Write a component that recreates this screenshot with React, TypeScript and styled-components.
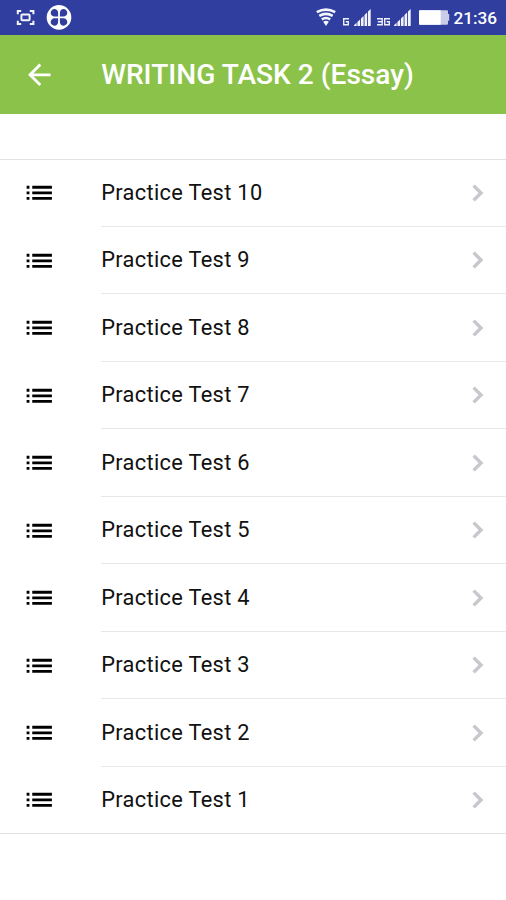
import React from "react";
import styled, { createGlobalStyle } from "styled-components";

const GlobalStyle = createGlobalStyle`
  * { box-sizing: border-box; }
  body { margin: 0; background: #fff; font-family: Roboto, "Liberation Sans", sans-serif; overflow: hidden; }
  svg { display: block; flex: none; }
`;

const Screen = styled.div`
  width: 506px;
  height: 900px;
  background: #fff;
`;

const StatusBar = styled.header`
  display: flex;
  justify-content: space-between;
  height: 35px;
  background: #303f9f;
  color: #fff;
`;

const StatusGroup = styled.div`
  display: flex;
`;

const StatusSlot = styled.span<{ $gap: number }>`
  margin-right: ${(p) => p.$gap}px;
`;

const Clock = styled.time`
  width: 52.5px;
  font-size: 17.2px;
  font-weight: 500;
  line-height: 36px;
  white-space: nowrap;
`;

const AppBar = styled.div`
  display: flex;
  align-items: center;
  height: 78.7px;
  padding-left: 22px;
  background: #8bc34a;
  color: #fff;
`;

const Title = styled.h1`
  margin: 1px 0 0 45.5px;
  font-size: 28.1px;
  font-weight: 500;
  line-height: 40px;
  white-space: nowrap;
`;

const TestList = styled.ul`
  margin: 45px 0 0;
  padding: 0;
  list-style: none;
  border-top: 1px solid #e2e2e2;
  border-bottom: 1px solid #e2e2e2;
`;

const Row = styled.li`
  display: flex;
  height: 67.5px;
  padding-left: 22px;
  align-items: center;
  &:first-child { height: 67.2px; }
  &:last-child { height: 66.2px; }
`;

const RowBody = styled.div<{ $last: boolean }>`
  display: flex;
  flex: 1;
  height: 100%;
  align-items: center;
  justify-content: space-between;
  margin-left: 45.5px;
  padding-right: 22px;
  border-bottom: ${(p) => (p.$last ? "0" : "1px solid #e8e8e8")};
`;

const RowTitle = styled.span`
  font-size: 21.8px;
  line-height: 32px;
  letter-spacing: 0.32px;
  color: #111;
`;

const NotificationIcons = () => (
  <svg width="78" height="35" viewBox="0 0 78 35" fill="none">
    <path d="M17.8 14.2v-3.1h3.4M29.8 11.1h3.6v3.1M17.8 20.8v3.3h3.4M29.8 24.1h3.6v-3.3" stroke="#f4f5fb" strokeWidth="2" />
    <rect x="21.4" y="14.6" width="8.2" height="5.6" rx="1" stroke="#f4f5fb" strokeWidth="2" />
    <circle cx="59" cy="17.4" r="12.3" fill="#fff" />
    <g fill="#303f9f">
      <path d="M58.1 16.5h-3.4a3.7 3.7 0 1 1 3.4-3.4z" />
      <path d="M59.9 16.5v-3.4a3.7 3.7 0 1 1 3.4 3.4z" />
      <path d="M58.1 18.3v3.4a3.7 3.7 0 1 1-3.4-3.4z" />
      <path d="M59.9 18.3h3.4a3.7 3.7 0 1 1-3.4 3.4z" />
    </g>
  </svg>
);

const WifiIcon = () => (
  <svg width="20" height="35" viewBox="0 0 20 35" fill="none" stroke="#f5f6fb" strokeWidth="2.6">
    <path d="M.8 12.1Q10 7.1 19.2 12.1" />
    <path d="M3.3 15.9Q10 11.9 16.7 15.9" />
    <path d="M5.8 19.4Q10 16.7 14.2 19.4" />
    <path d="M7.2 21.8Q10 19.9 12.8 21.8L10 25.9z" fill="#f5f6fb" stroke="none" />
  </svg>
);

const SignalIcon = () => (
  <svg width="17" height="35" viewBox="0 0 17 35" fill="#f2f3fa">
    <path d="M0 25.2l2.6-2.5V26H0zM3.4 22l2.7-2.5V26H3.4zM7 18.5l2.6-2.6V26H7zM10.5 15l2.6-2.6V26h-2.6zM14 11.4l2.7-2.5V26H14z" />
  </svg>
);

const NetworkG = () => (
  <svg width="6" height="35" viewBox="0 0 6 35" fill="none" stroke="#eef0fa" strokeWidth="1.4">
    <path d="M6 18.7H.7v6h4.6v-3H2.7" />
  </svg>
);

const Network3G = () => (
  <svg width="13" height="35" viewBox="0 0 13 35" fill="none" stroke="#eef0fa" strokeWidth="1.4">
    <path d="M0 18.7h5.2v6H0M.8 21.7h4.4M13 18.7H7.7v6h4.6v-3H9.7" />
  </svg>
);

const BatteryIcon = () => (
  <svg width="31" height="35" viewBox="0 0 31 35">
    <path d="M1 10.3h27a1 1 0 0 1 1 1v2.8h1.2v6.6H29v3a1 1 0 0 1-1 1H1a1 1 0 0 1-1-1V11.3a1 1 0 0 1 1-1z" fill="#c9cde8" />
    <path d="M1 10.3h20.7v14.4H1a1 1 0 0 1-1-1V11.3a1 1 0 0 1 1-1z" fill="#fff" />
  </svg>
);

const BackIcon = () => (
  <svg width="33.7" height="33.7" viewBox="-0.3 0 24 24" fill="currentColor">
    <path d="M20 11H7.83l5.59-5.59L12 4l-8 8 8 8 1.41-1.41L7.83 13H20v-2z" />
  </svg>
);

const ListIcon = () => (
  <svg width="33.7" height="33.7" viewBox="-0.3 0 24 24" fill="#000">
    <path d="M3 13h2v-2H3v2zm0 4h2v-2H3v2zm0-8h2V7H3v2zm4 4h14v-2H7v2zm0 4h14v-2H7v2zM7 7v2h14V7H7z" />
  </svg>
);

const Chevron = () => (
  <svg width="12" height="18" viewBox="0 0 12 18" fill="none" stroke="#c7c7cc" strokeWidth="3.4">
    <path d="M1.6 1.6L9 9l-7.4 7.4" />
  </svg>
);

const tests = [10, 9, 8, 7, 6, 5, 4, 3, 2, 1];

export default function App() {
  return (
    <Screen>
      <GlobalStyle />
      <StatusBar>
        <NotificationIcons />
        <StatusGroup>
          <StatusSlot $gap={7}><WifiIcon /></StatusSlot>
          <StatusSlot $gap={4.5}><NetworkG /></StatusSlot>
          <StatusSlot $gap={6}><SignalIcon /></StatusSlot>
          <StatusSlot $gap={4.5}><Network3G /></StatusSlot>
          <StatusSlot $gap={7.5}><SignalIcon /></StatusSlot>
          <StatusSlot $gap={4}><BatteryIcon /></StatusSlot>
          <Clock>21:36</Clock>
        </StatusGroup>
      </StatusBar>
      <AppBar>
        <BackIcon />
        <Title>WRITING TASK 2 (Essay)</Title>
      </AppBar>
      <TestList>
        {tests.map((n) => (
          <Row key={n}>
            <ListIcon />
            <RowBody $last={n === 1}>
              <RowTitle>Practice Test {n}</RowTitle>
              <Chevron />
            </RowBody>
          </Row>
        ))}
      </TestList>
    </Screen>
  );
}
